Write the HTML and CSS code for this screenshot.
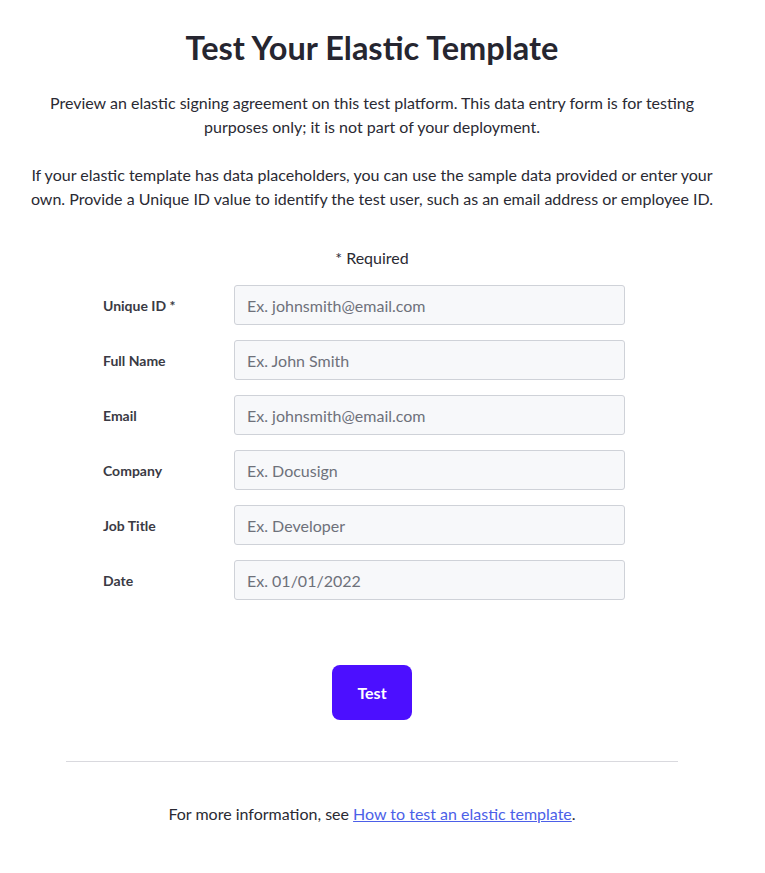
FILE: index.html
```html
<!DOCTYPE html>
<html lang="en">
<head>
<meta charset="utf-8">
<title>Test Your Elastic Template</title>
<link rel="stylesheet" href="styles.css">
</head>
<body>
<main class="page">
  <h1 class="title">Test Your Elastic Template</h1>
  <p class="intro">Preview an elastic signing agreement on this test platform. This data entry form is for testing purposes only; it is not part of your deployment.</p>
  <p class="intro">If your elastic template has data placeholders, you can use the sample data provided or enter your own. Provide a Unique ID value to identify the test user, such as an email address or employee ID.</p>
  <p class="required">* Required</p>
  <form class="form">
    <div class="row"><label class="label" for="uid">Unique ID *</label><input class="input" id="uid" placeholder="Ex. johnsmith@email.com"></div>
    <div class="row"><label class="label" for="name">Full Name</label><input class="input" id="name" placeholder="Ex. John Smith"></div>
    <div class="row"><label class="label" for="email">Email</label><input class="input" id="email" placeholder="Ex. johnsmith@email.com"></div>
    <div class="row"><label class="label" for="company">Company</label><input class="input" id="company" placeholder="Ex. Docusign"></div>
    <div class="row"><label class="label" for="job">Job Title</label><input class="input" id="job" placeholder="Ex. Developer"></div>
    <div class="row"><label class="label" for="date">Date</label><input class="input" id="date" placeholder="Ex. 01/01/2022"></div>
    <div class="actions"><button class="btn" type="button">Test</button></div>
  </form>
  <hr class="rule">
  <p class="footer">For more information, see <a class="link" href="#">How to test an elastic template</a>.</p>
</main>
</body>
</html>
```
FILE: styles.css
```css
* { box-sizing: border-box; }
html, body { margin: 0; padding: 0; background: #fff; }
body {
  font-family: Lato, "Open Sans", sans-serif;
  color: #2a2a33;
}
.page {
  width: 744px;
  padding-top: 28px;
  display: flex;
  flex-direction: column;
  align-items: center;
}
.title {
  margin: 0 0 23px;
  font-size: 32.5px;
  font-weight: 700;
  line-height: 40px;
  color: #262630;
}
.intro {
  margin: 0 0 24px;
  width: 696px;
  font-size: 16px;
  line-height: 24px;
  text-align: center;
}
.required {
  margin: 11px 0 15px;
  font-size: 16px;
  line-height: 24px;
}
.form {
  width: 744px;
  display: flex;
  flex-direction: column;
  gap: 15px;
}
.row {
  display: flex;
  align-items: center;
  padding-left: 103px;
}
.label {
  width: 131px;
  font-size: 14px;
  font-weight: 700;
  color: #3a3a44;
}
.input {
  width: 391px;
  height: 40px;
  padding: 0 12px;
  background: #f7f8fa;
  border: 1px solid #cfd2d8;
  border-radius: 3px;
  font-family: inherit;
  font-size: 16px;
  color: #2a2a33;
}
.input::placeholder { color: #6e717a; opacity: 1; }
.actions {
  display: flex;
  justify-content: center;
  margin-top: 50px;
}
.btn {
  width: 80px;
  height: 55px;
  border: none;
  border-radius: 8px;
  background: #4c0fff;
  color: #fff;
  font-family: inherit;
  font-size: 16px;
  font-weight: 700;
}
.rule {
  width: 612px;
  margin: 41px 0 0;
  border: none;
  border-top: 1px solid #d9d9de;
}
.footer {
  margin: 40px 0 0;
  font-size: 16px;
  line-height: 24px;
}
.link { color: #4c5fe8; text-decoration: underline; }
```
